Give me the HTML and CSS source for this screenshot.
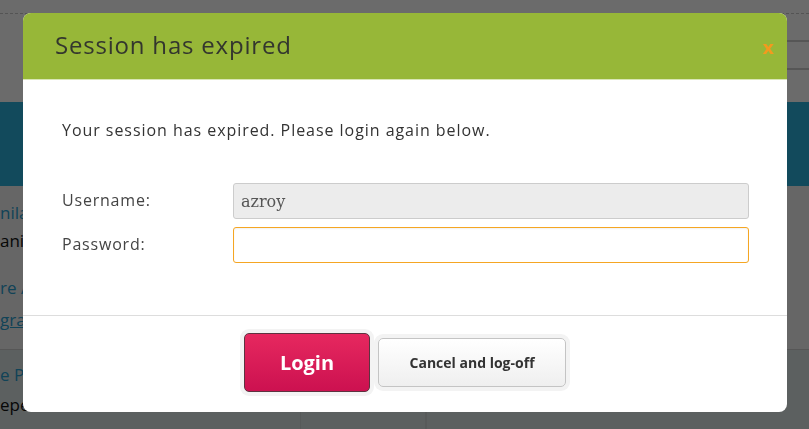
FILE: index.html
```html
<!doctype html>
<html>
<head>
 <meta charset="utf-8">
 <title>Session has expired</title>
<link rel="stylesheet" href="styles.css">
</head>
<body>
  <div id="page">
    <div class="topbar"></div>
    <div class="nav">
      <div class="navrow"></div>
      <div class="navrow"></div>
    </div>
    <div class="banner"></div>
    <div class="content">
      <p class="link">nila Office</p>
      <p class="plain">anila</p>
      <p class="link">re Account</p>
      <p class="link under">grams</p>
    </div>
    <div class="foot">
      <div class="col">
        <p class="link">e People</p>
        <p class="plain">ependent</p>
      </div>
      <div class="col"></div>
      <div class="col"></div>
    </div>
  </div>

  <div id="overlay"></div>

  <div id="dialog">
    <div class="head">
      <h1>Session has expired</h1>
      <span class="close">x</span>
    </div>
    <div class="body">
      <p class="msg">Your session has expired. Please login again below.</p>
      <div class="row">
        <label>Username:</label>
        <input type="text" class="locked" value="azroy" readonly>
      </div>
      <div class="row">
        <label>Password:</label>
        <input type="password" class="focus">
      </div>
    </div>
    <div class="foot">
      <button class="login">Login</button>
      <button class="cancel">Cancel and log-off</button>
    </div>
  </div>
</body>
</html>
```

FILE: styles.css
```css
html,body{margin:0;padding:0;width:100%;height:100%;overflow:hidden;}
body{font-family:"Open Sans",Lato,sans-serif;background:#eceeee;}
p,h1{margin:0;padding:0;}

#page{width:100%;height:100%;display:flex;flex-direction:column;}
#page .topbar{height:13px;flex:none;border-bottom:1px dashed #c8c8c8;background:#fff;}
#page .nav{height:88px;flex:none;background:#fff;display:flex;flex-direction:column;align-items:flex-end;}
#page .navrow{width:40px;height:26px;border-bottom:2px solid #ccc;}
#page .banner{height:84px;flex:none;background:#2db0db;}
#page .content{height:164px;flex:none;background:#f2f2f2;padding:13px 0 0 0;box-sizing:border-box;border-bottom:1px solid #ccc;font-size:17px;white-space:nowrap;}
#page p{line-height:28px;font-size:17px;white-space:nowrap;}
#page .link{color:#2a9fd0;}
#page .plain{color:#111;}
#page .content .plain{margin-bottom:19px;}
#page .content .under{text-decoration:underline;margin-top:4px;}
#page .foot{flex:1;min-height:0;background:#dbe4e4;display:flex;}
#page .foot .col{border-right:1px solid #cfd6d6;}
#page .foot .col:first-child{width:300px;padding-top:11px;}
#page .foot .col:first-child .link{margin-bottom:2px;}
#page .foot .col:nth-child(2){width:124px;}

#overlay{position:fixed;top:0;left:0;right:0;bottom:0;background:rgba(0,0,0,.58);}

#dialog{position:fixed;top:13px;left:23px;width:764px;height:399px;background:#fff;border-radius:8px;overflow:hidden;display:flex;flex-direction:column;}
#dialog .head{height:66px;background:#97b738;border-bottom:1px solid #d9e6b5;display:flex;align-items:center;justify-content:space-between;padding:0 13px 0 32px;}
#dialog .head h1{font-size:24px;font-weight:normal;color:#33362e;letter-spacing:.8px;margin-top:-4px;}
#dialog .head .close{color:#f39a1e;font-size:18px;font-weight:bold;font-family:"DejaVu Sans",sans-serif;margin-top:2px;}
#dialog .body{padding:39px 38px 0 39px;height:236px;box-sizing:border-box;border-bottom:1px solid #ddd;}
#dialog .msg{font-size:16px;color:#333;letter-spacing:.95px;margin-bottom:42px;}
#dialog .row{display:flex;align-items:center;margin-bottom:8px;}
#dialog .row label{width:171px;font-size:16px;color:#444;letter-spacing:.8px;margin-top:-3px;}
#dialog .row input{flex:1;height:36px;box-sizing:border-box;border:1px solid #ccc;border-radius:3px;padding:0 7px;font-family:"DejaVu Serif",Georgia,serif;font-size:16px;color:#555;outline:none;}
#dialog .row input.locked{background:#ececec;}
#dialog .row input.focus{border-color:#f5a623;background:#fff;box-shadow:inset 0 1px 2px rgba(0,0,0,.06);}
#dialog .foot{flex:1;display:flex;justify-content:center;align-items:center;gap:8px;padding-bottom:4px;}
#dialog .foot button{border-radius:5px;cursor:pointer;box-shadow:0 0 0 4px #f3f3f3;font-family:"Open Sans",Lato,sans-serif;}
#dialog .login{width:126px;height:59px;background:linear-gradient(#e6285f,#cc1150);border:1px solid #5d3340;color:#fff;font-size:20px;font-weight:bold;}
#dialog .cancel{width:188px;height:49px;background:linear-gradient(#fff,#efefef);border:1px solid #c4c4c4;color:#333;font-size:14px;font-weight:bold;}
```
